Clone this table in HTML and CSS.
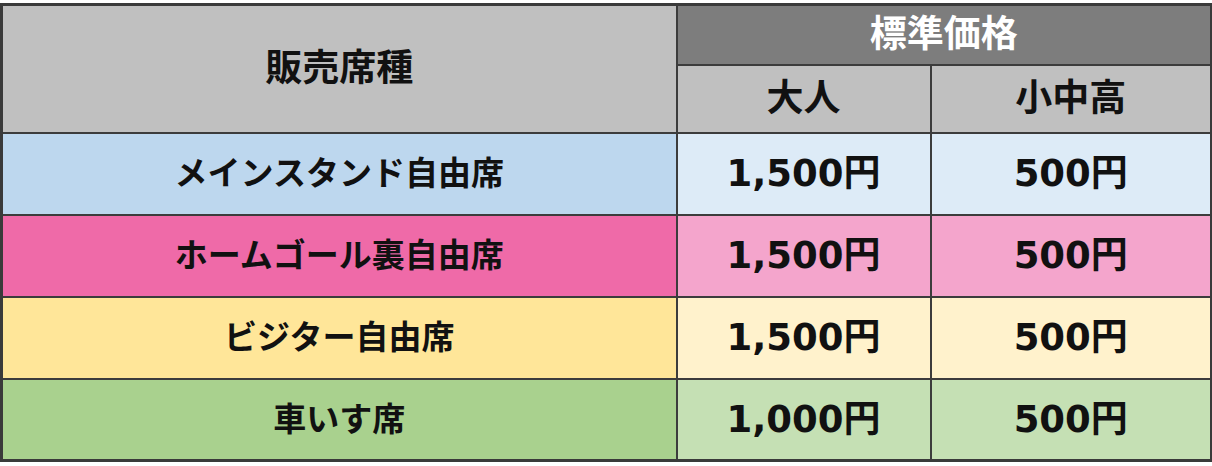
FILE: index.html
```html
<!DOCTYPE html>
<html lang="ja">
<head>
<meta charset="utf-8">
<title>料金表</title>
<link rel="stylesheet" href="styles.css">
</head>
<body>
<div class="wrap">
<table class="price">
  <colgroup>
    <col class="c-label">
    <col class="c-adult">
    <col class="c-child">
  </colgroup>
  <thead>
    <tr class="h1">
      <th rowspan="2" class="h-gray">販売席種</th>
      <th colspan="2" class="h-dark">標準価格</th>
    </tr>
    <tr class="h2">
      <th class="h-gray">大人</th>
      <th class="h-gray">小中高</th>
    </tr>
  </thead>
  <tbody>
    <tr class="row blue">
      <td class="lab">メインスタンド自由席</td>
      <td class="val">1,500円</td>
      <td class="val">500円</td>
    </tr>
    <tr class="row pink">
      <td class="lab">ホームゴール裏自由席</td>
      <td class="val">1,500円</td>
      <td class="val">500円</td>
    </tr>
    <tr class="row yellow">
      <td class="lab">ビジター自由席</td>
      <td class="val">1,500円</td>
      <td class="val">500円</td>
    </tr>
    <tr class="row green">
      <td class="lab">車いす席</td>
      <td class="val">1,000円</td>
      <td class="val">500円</td>
    </tr>
  </tbody>
</table>
</div>
</body>
</html>
```

FILE: styles.css
```css
html, body {
  margin: 0;
  padding: 0;
  background: #ffffff;
}

.wrap {
  padding: 3px 0 0 0;
}

.price {
  border-collapse: collapse;
  width: 1210px;
  table-layout: fixed;
  font-family: "DejaVu Sans", "Noto Sans CJK JP", sans-serif;
  font-weight: bold;
  font-size: 34px;
  color: #111111;
  border: 3px solid #3a3a3a;
}

.c-label { width: 675px; }
.c-adult { width: 254px; }
.c-child { width: 281px; }

.price th,
.price td {
  border: 2px solid #3c3c3c;
  text-align: center;
  vertical-align: middle;
  padding: 0;
  line-height: 1;
}

.h1 { height: 60px; }
.h2 { height: 68px; }
.row { height: 82px; }

.h-gray {
  background: #c0c0c0;
  font-size: 37px;
}

.h-dark {
  background: #7d7d7d;
  color: #ffffff;
  font-size: 37px;
}

.lab { font-size: 33px; }
.val { font-size: 37px; }

.blue .lab { background: #bdd7ee; }
.blue td { background: #ddebf7; }

.pink .lab { background: #ef6aa8; }
.pink td { background: #f4a5cc; }

.yellow .lab { background: #ffe699; }
.yellow td { background: #fff2cc; }

.green .lab { background: #a9d18e; }
.green td { background: #c5e0b4; }
```
